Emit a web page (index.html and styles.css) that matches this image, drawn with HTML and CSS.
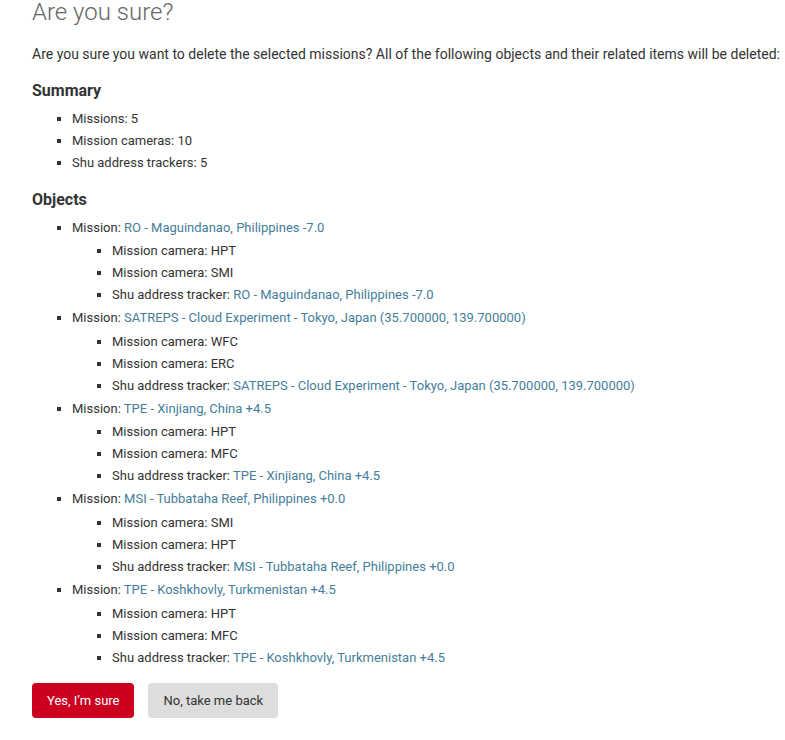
FILE: index.html
```html
<!DOCTYPE html>
<html lang="en">
<head>
<meta charset="utf-8">
<title>Are you sure?</title>
<link rel="stylesheet" href="styles.css">
</head>
<body>
<div class="content">
  <h1>Are you sure?</h1>
  <p>Are you sure you want to delete the selected missions? All of the following objects and their related items will be deleted:</p>
  <h2>Summary</h2>
  <ul>
    <li>Missions: 5</li>
    <li>Mission cameras: 10</li>
    <li>Shu address trackers: 5</li>
  </ul>
  <h2>Objects</h2>
  <ul>
    <li>Mission: <a href="#">RO - Maguindanao, Philippines -7.0</a>
      <ul>
        <li>Mission camera: HPT</li>
        <li>Mission camera: SMI</li>
        <li>Shu address tracker: <a href="#">RO - Maguindanao, Philippines -7.0</a></li>
      </ul>
    </li>
    <li>Mission: <a href="#">SATREPS - Cloud Experiment - Tokyo, Japan (35.700000, 139.700000)</a>
      <ul>
        <li>Mission camera: WFC</li>
        <li>Mission camera: ERC</li>
        <li>Shu address tracker: <a href="#">SATREPS - Cloud Experiment - Tokyo, Japan (35.700000, 139.700000)</a></li>
      </ul>
    </li>
    <li>Mission: <a href="#">TPE - Xinjiang, China +4.5</a>
      <ul>
        <li>Mission camera: HPT</li>
        <li>Mission camera: MFC</li>
        <li>Shu address tracker: <a href="#">TPE - Xinjiang, China +4.5</a></li>
      </ul>
    </li>
    <li>Mission: <a href="#">MSI - Tubbataha Reef, Philippines +0.0</a>
      <ul>
        <li>Mission camera: SMI</li>
        <li>Mission camera: HPT</li>
        <li>Shu address tracker: <a href="#">MSI - Tubbataha Reef, Philippines +0.0</a></li>
      </ul>
    </li>
    <li>Mission: <a href="#">TPE - Koshkhovly, Turkmenistan +4.5</a>
      <ul>
        <li>Mission camera: HPT</li>
        <li>Mission camera: MFC</li>
        <li>Shu address tracker: <a href="#">TPE - Koshkhovly, Turkmenistan +4.5</a></li>
      </ul>
    </li>
  </ul>
  <form class="actions">
    <button type="button" class="btn btn-delete">Yes, I’m sure</button>
    <a href="#" class="btn btn-cancel">No, take me back</a>
  </form>
</div>
</body>
</html>
```
FILE: styles.css
```css
html, body {
  margin: 0;
  padding: 0;
  background: #fff;
}
body {
  font-family: Roboto, "Liberation Sans", sans-serif;
  font-size: 14px;
  color: #333;
}
.content {
  padding: 0 0 0 32px;
}
h1 {
  margin: 0 0 17px;
  font-size: 24px;
  line-height: 28px;
  font-weight: 300;
  color: #666;
  position: relative;
  top: -2px;
}
p {
  font-size: 14px;
  line-height: 140%;
  margin: 0 0 16px;
}
h2 {
  font-size: 16px;
  font-weight: 700;
  line-height: 20px;
  margin: 16px 0 7px;
  color: #333;
}
ul {
  margin: 2.6px 0 10.4px;
  padding-left: 40px;
}
li ul {
  margin: 2.6px 0 0;
}
li {
  list-style-type: square;
  font-size: 13px;
  line-height: 20px;
  padding: 1px 0;
}
a {
  color: #447e9b;
  text-decoration: none;
}
.actions {
  display: flex;
  gap: 14px;
  margin-top: 13px;
}
.btn {
  display: inline-block;
  font-family: Roboto, "Liberation Sans", sans-serif;
  font-size: 13px;
  line-height: 15px;
  padding: 10px 15px;
  border-radius: 4px;
  border: none;
  cursor: pointer;
}
.btn-delete {
  background: #cc001f;
  color: #fff;
}
.btn-cancel {
  background: #dddddd;
  color: #333;
}
```
